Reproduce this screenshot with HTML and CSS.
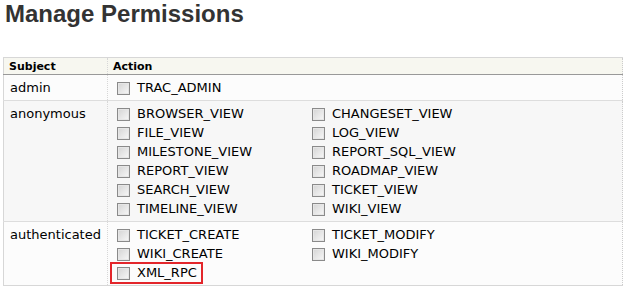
FILE: index.html
```html
<!DOCTYPE html>
<html lang="en">
    <head>
        <meta charset="UTF-8">
        <title>Manage Permissions</title>
        <link rel="stylesheet" href="styles.css">
    </head>
    <body>
        <h1>Manage Permissions</h1>

        <table class="listing">
            <thead>
                <tr>
                    <th class="subject">Subject</th>
                    <th>Action</th>
                </tr>
            </thead>
            <tbody>
                <tr class="even">
                    <td class="subject">admin</td>
                    <td>
                        <div class="perms">
                            <label><input type="checkbox"> TRAC_ADMIN</label>
                        </div>
                    </td>
                </tr>
                <tr class="odd">
                    <td class="subject">anonymous</td>
                    <td>
                        <div class="perms">
                            <label><input type="checkbox"> BROWSER_VIEW</label>
                            <label><input type="checkbox"> CHANGESET_VIEW</label>
                            <label><input type="checkbox"> FILE_VIEW</label>
                            <label><input type="checkbox"> LOG_VIEW</label>
                            <label><input type="checkbox"> MILESTONE_VIEW</label>
                            <label><input type="checkbox"> REPORT_SQL_VIEW</label>
                            <label><input type="checkbox"> REPORT_VIEW</label>
                            <label><input type="checkbox"> ROADMAP_VIEW</label>
                            <label><input type="checkbox"> SEARCH_VIEW</label>
                            <label><input type="checkbox"> TICKET_VIEW</label>
                            <label><input type="checkbox"> TIMELINE_VIEW</label>
                            <label><input type="checkbox"> WIKI_VIEW</label>
                        </div>
                    </td>
                </tr>
                <tr class="even">
                    <td class="subject">authenticated</td>
                    <td>
                        <div class="perms">
                            <label><input type="checkbox"> TICKET_CREATE</label>
                            <label><input type="checkbox"> TICKET_MODIFY</label>
                            <label><input type="checkbox"> WIKI_CREATE</label>
                            <label><input type="checkbox"> WIKI_MODIFY</label>
                            <label class="highlight"><input type="checkbox"> XML_RPC</label>
                        </div>
                    </td>
                </tr>
            </tbody>
        </table>
    </body>
</html>
```

FILE: styles.css
```css
body {
    margin: 0;
    padding: 0 5px 0 3px;
    font-family: "DejaVu Sans", Verdana, sans-serif;
    font-size: 13px;
    color: #000;
    background: #fff;
}

h1 {
    font-family: "Liberation Sans", Arial, sans-serif;
    font-size: 24px;
    font-weight: bold;
    color: #333;
    margin: 0 0 30px 2px;
    line-height: 27px;
}

.listing {
    border-collapse: collapse;
    width: 620px;
    border: 1px solid #d7d7d7;
    border-right: 1px dotted #ccc;
}

.listing th {
    background: #f7f7f0;
    border-bottom: 1px solid #999;
    text-align: left;
    font-size: 11px;
    font-weight: bold;
    padding: 1px 4px 1px 5px;
    height: 14px;
}

.listing th.subject {
    border-right: 1px dotted #d7d7d7;
}

.listing td {
    vertical-align: top;
    padding: 3px 5px 3px 8px;
    border-top: 1px solid #ddd;
}

.listing td.subject {
    width: 92px;
    padding-left: 6px;
    border-right: 1px dotted #d7d7d7;
    line-height: 19px;
}

.even {
    background: #fcfcfc;
}

.odd {
    background: #f7f7f7;
}

.perms {
    display: grid;
    grid-template-columns: 195px 195px;
}

.perms label {
    display: flex;
    align-items: center;
    height: 19px;
    width: max-content;
}

.perms input {
    appearance: none;
    width: 13px;
    height: 13px;
    margin: 1px 7px 0 1px;
    border: 1px solid #8a8a8a;
    background: linear-gradient(135deg, #d4d4d4, #f8f8f8);
    box-shadow: inset 0 0 0 1px #e6e6e6;
}

.highlight {
    position: relative;
}

.highlight::after {
    content: "";
    position: absolute;
    left: -6px;
    right: -6px;
    top: -1px;
    bottom: -2px;
    border: 2px solid #e3262b;
}
```
